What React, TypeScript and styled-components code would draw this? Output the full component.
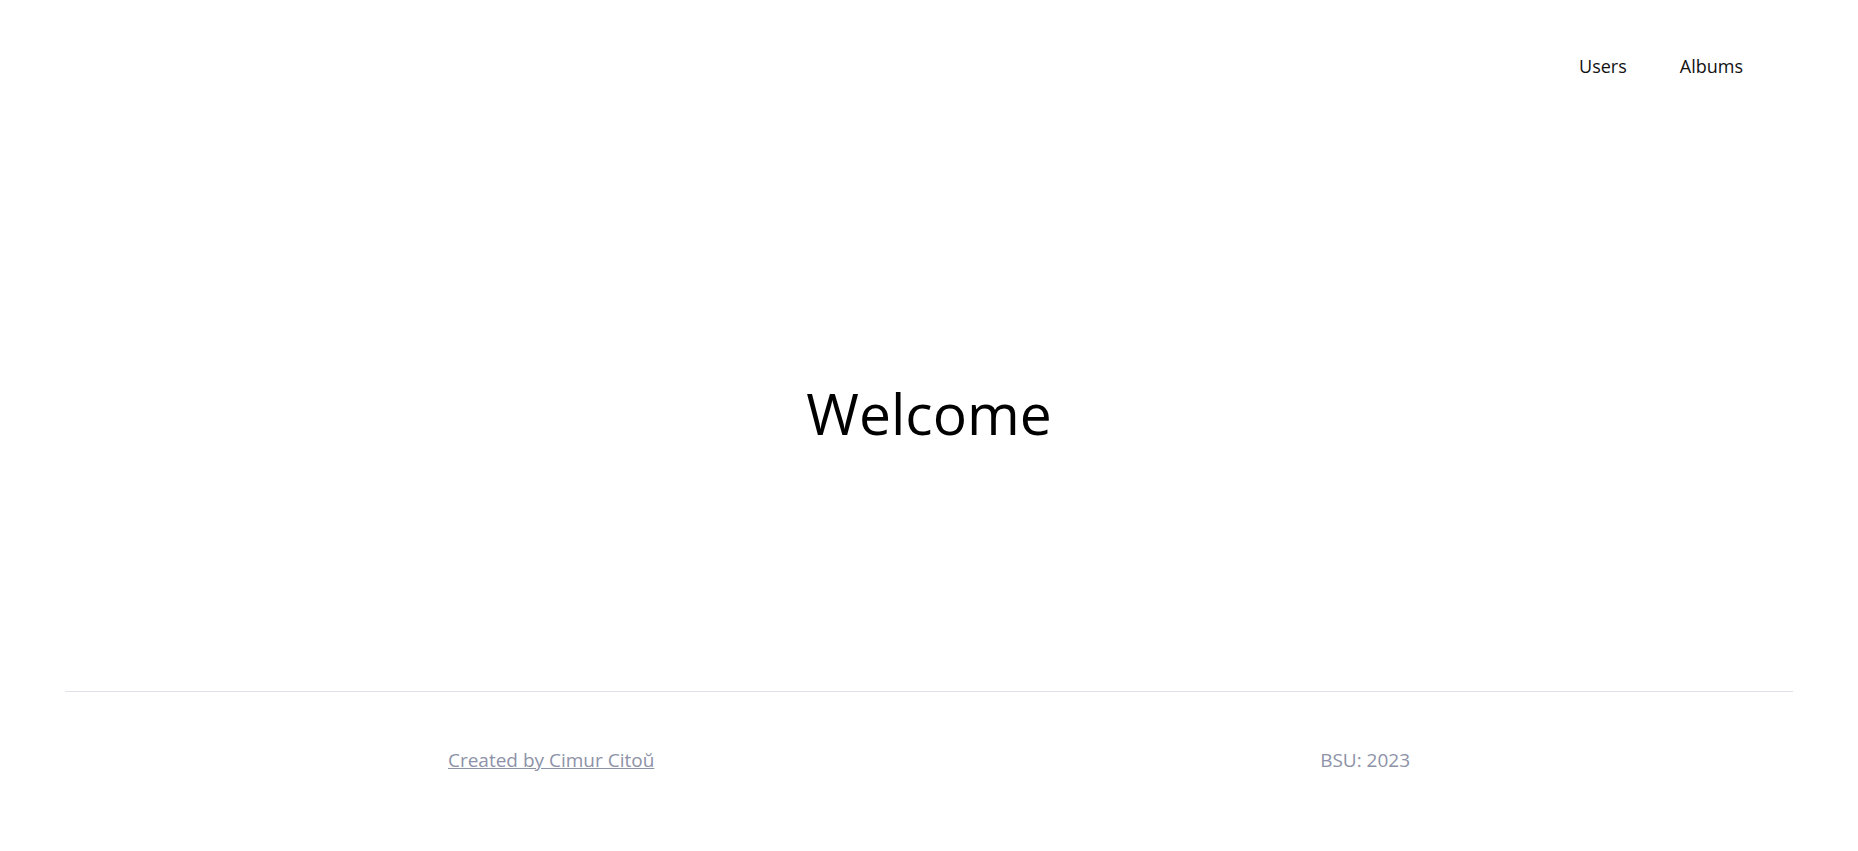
import React from "react";
import styled, { createGlobalStyle } from "styled-components";

const GlobalStyle = createGlobalStyle`
  html, body {
    margin: 0;
    padding: 0;
    background: #ffffff;
    font-family: "Open Sans", "Noto Sans", sans-serif;
  }
`;

const Page = styled.div`
  display: flex;
  flex-direction: column;
  min-height: 100vh;
`;

const Header = styled.header`
  display: flex;
  justify-content: flex-end;
  align-items: flex-start;
  height: 110px;
  padding: 54px 115px 0;
  box-sizing: border-box;
`;

const Nav = styled.nav`
  display: flex;
  gap: 53px;
`;

const NavLink = styled.a`
  font-size: 18px;
  color: #111111;
  text-decoration: none;
  cursor: pointer;
`;

const Main = styled.main`
  height: 581px;
  display: flex;
  align-items: center;
  justify-content: center;
  padding-top: 24px;
  box-sizing: border-box;
`;

const Title = styled.h1`
  margin: 0;
  font-size: 57px;
  font-weight: 400;
  color: #000000;
`;

const Footer = styled.footer`
  margin: 0 65px;
  border-top: 1px solid #e1e1e8;
  padding: 55px 50px 0;
  display: flex;
  justify-content: space-around;
`;

const FooterLink = styled.a`
  font-size: 19px;
  color: #8d92a8;
  text-decoration: underline;
  cursor: pointer;
`;

const FooterText = styled.span`
  font-size: 19px;
  color: #8d92a8;
`;

export default function App() {
  return (
    <>
      <GlobalStyle />
      <Page>
        <Header>
          <Nav>
            <NavLink>Users</NavLink>
            <NavLink>Albums</NavLink>
          </Nav>
        </Header>
        <Main>
          <Title>Welcome</Title>
        </Main>
        <Footer>
          <FooterLink>Created by Cimur Citoŭ</FooterLink>
          <FooterText>BSU: 2023</FooterText>
        </Footer>
      </Page>
    </>
  );
}
